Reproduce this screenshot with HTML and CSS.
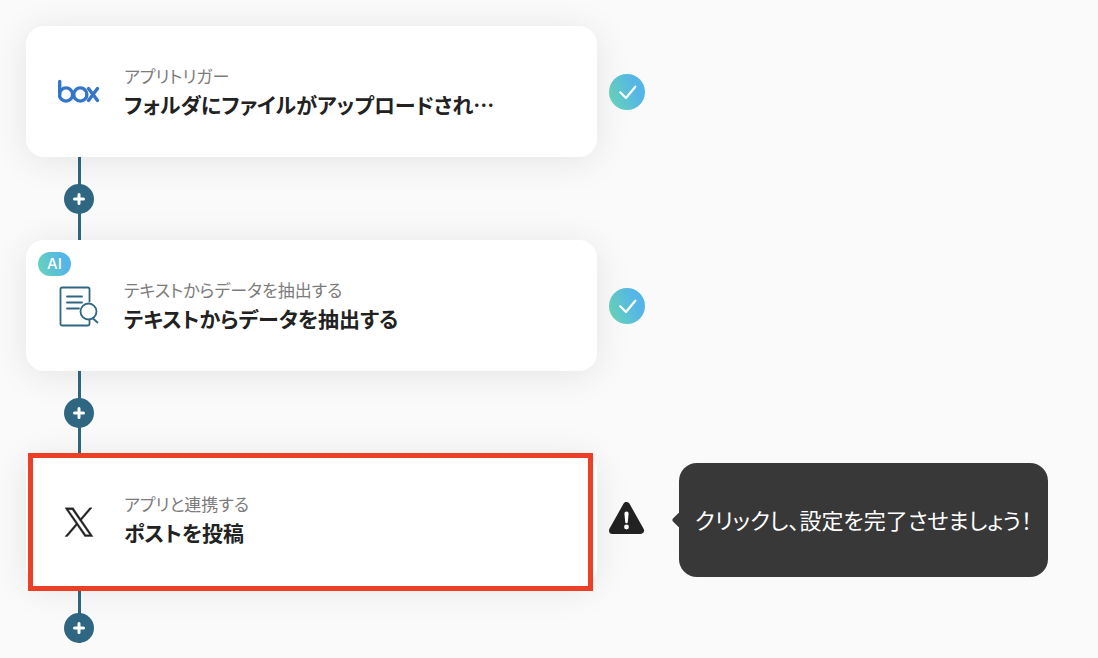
FILE: index.html
```html
<!DOCTYPE html>
<html lang="ja">
<head>
    <meta charset="UTF-8">
    <meta name="viewport" content="width=device-width, initial-scale=1.0">
    <title>フロー</title>
    <link rel="stylesheet" href="styles.css">
</head>
<body>
    <main class="flow">
        <section class="step">
            <div class="card">
                <svg class="icon" viewBox="0 0 42 42" fill="none" stroke="#3375c9" stroke-width="3.400" stroke-linecap="round">
                    <path d="M1.700 10.500v13"/>
                    <circle cx="8" cy="23.500" r="6.600"/>
                    <circle cx="22.300" cy="23.500" r="6.600"/>
                    <path d="M30.500 17.500l9 12M39.500 17.500l-9 12"/>
                </svg>
                <div class="text">
                    <p class="label">アプリトリガー</p>
                    <h2 class="title">フォルダにファイルがアップロードされ…</h2>
                </div>
            </div>
            <svg class="status" viewBox="0 0 36 36" role="img" aria-label="完了">
                <defs>
                    <linearGradient id="done" x1="0" y1="0.7" x2="1" y2="0.3">
                        <stop offset="0.05" stop-color="#68d3bd"/>
                        <stop offset="0.75" stop-color="#55b5e6"/>
                    </linearGradient>
                </defs>
                <circle cx="18" cy="18" r="18" fill="url(#done)"/>
                <path d="M11.200 18.300l5.800 5.700 9.300-11.300" fill="none" stroke="#fff" stroke-width="2.200" stroke-linecap="round" stroke-linejoin="round"/>
            </svg>
        </section>

        <div class="connector">
            <button type="button" class="add" aria-label="追加">
                <svg viewBox="0 0 12 12" stroke="#fff" stroke-width="3" stroke-linecap="round"><path d="M6 1.500v9M1.500 6h9"/></svg>
            </button>
        </div>

        <section class="step">
            <div class="card">
                <span class="badge">AI</span>
                <svg class="icon" viewBox="0 0 42 42" fill="none" stroke="#2f6782" stroke-width="1.800" stroke-linecap="round" stroke-linejoin="round">
                    <path d="M31.500 16.500V4A1.500 1.500 0 0 0 30 2.500H4A1.500 1.500 0 0 0 2.500 4v35A1.500 1.500 0 0 0 4 40.500h26a1.500 1.500 0 0 0 1.500-1.500v-5"/>
                    <path d="M9 11.500h15M9 17.500h15M9 23.500h12"/>
                    <circle cx="30.500" cy="26.500" r="8" fill="#fff"/>
                    <path d="M35 33.500l4.500 4"/>
                </svg>
                <div class="text">
                    <p class="label">テキストからデータを抽出する</p>
                    <h2 class="title">テキストからデータを抽出する</h2>
                </div>
            </div>
            <svg class="status" viewBox="0 0 36 36" role="img" aria-label="完了">
                <circle cx="18" cy="18" r="18" fill="url(#done)"/>
                <path d="M11.200 18.300l5.800 5.700 9.300-11.300" fill="none" stroke="#fff" stroke-width="2.200" stroke-linecap="round" stroke-linejoin="round"/>
            </svg>
        </section>

        <div class="connector">
            <button type="button" class="add" aria-label="追加">
                <svg viewBox="0 0 12 12" stroke="#fff" stroke-width="3" stroke-linecap="round"><path d="M6 1.500v9M1.500 6h9"/></svg>
            </button>
        </div>

        <section class="step">
            <div class="card selected">
                <svg class="icon" viewBox="-300 -380 1800 1800" fill="#222" stroke="#222" stroke-width="16">
                    <path d="M714.163 519.284L1160.890 0H1055.030L667.137 450.887L357.328 0H0L468.492 681.821L0 1226.370H105.866L515.491 750.218L842.672 1226.370H1200L714.137 519.284H714.163ZM569.165 687.828L521.697 619.934L144.011 79.694H306.615L611.412 515.685L658.880 583.579L1055.080 1150.300H892.476L569.165 687.854V687.828Z"/>
                </svg>
                <div class="text">
                    <p class="label">アプリと連携する</p>
                    <h2 class="title">ポストを投稿</h2>
                </div>
            </div>
            <svg class="status" viewBox="0 0 36 36" role="img" aria-label="未設定">
                <path d="M17.500 3.500L31.500 28.500H3.500z" fill="#222" stroke="#222" stroke-width="7" stroke-linejoin="round"/>
                <path d="M15.400 11.500a2.100 2.100 0 0 1 4.200 0l-.8 8.500a1.300 1.300 0 0 1-2.600 0z" fill="#fff"/>
                <circle cx="17.500" cy="25" r="2.400" fill="#fff"/>
            </svg>
            <div class="tooltip">クリックし、設定を完了させましょう！</div>
        </section>

        <div class="connector last">
            <button type="button" class="add" aria-label="追加">
                <svg viewBox="0 0 12 12" stroke="#fff" stroke-width="3" stroke-linecap="round"><path d="M6 1.500v9M1.500 6h9"/></svg>
            </button>
        </div>
    </main>
</body>
</html>
```
FILE: styles.css
```css
* {
    box-sizing: border-box;
}

body {
    margin: 0;
    background-color: #fafafa;
    color: #222;
    font-family: "Noto Sans CJK JP", sans-serif;
    font-feature-settings: "palt";
}

.flow {
    padding: 26px 0 0 26px;
}

.step {
    display: flex;
    align-items: center;
    gap: 12px;
}

.card {
    position: relative;
    display: flex;
    align-items: center;
    gap: 24px;
    width: 52vw;
    height: 131px;
    padding: 0 32px;
    background-color: #fff;
    border-radius: 18px;
    box-shadow: 0 4px 36px rgba(0, 0, 0, 0.09);
}

.selected {
    isolation: isolate;
}

/* red frame over the step that still needs settings */
.selected::after {
    content: "";
    position: absolute;
    z-index: -1;
    inset: -1px 4px -6px 2px;
    border: 5px solid #ec4026;
    background-color: #fff;
}

.icon {
    flex: none;
    width: 42px;
    height: 42px;
}

.text {
    min-width: 0;
    padding-bottom: 2px;
}

.label {
    margin: 0;
    color: #7c7c7c;
    font-size: 17px;
    line-height: 26px;
}

.title {
    margin: 0;
    font-size: 21px;
    font-weight: 700;
    line-height: 30px;
    white-space: nowrap;
    overflow: hidden;
    text-overflow: ellipsis;
}

.badge {
    position: absolute;
    top: 12px;
    left: 12px;
    padding: 0 9px;
    border-radius: 12px;
    background: linear-gradient(70deg, #68d3bd 5%, #55b5e6 75%);
    color: #fff;
    font-family: Inter, sans-serif;
    font-size: 15px;
    font-weight: 500;
    line-height: 24px;
}

.status {
    flex: none;
    width: 36px;
    height: 36px;
}

.connector {
    display: flex;
    align-items: center;
    height: 83px;
    padding-left: 38px;
    background: linear-gradient(#2f6782, #2f6782) 52px 0 / 3px 100% no-repeat;
}

.last {
    height: 58px;
    align-items: flex-end;
}

.add {
    display: flex;
    align-items: center;
    justify-content: center;
    width: 30px;
    height: 30px;
    padding: 0;
    border: none;
    border-radius: 50%;
    background-color: #2f6782;
    cursor: pointer;
}

.add svg {
    width: 12px;
    height: 12px;
}

.tooltip {
    position: relative;
    margin-left: 22px;
    padding: 41px 16px 43px;
    border-radius: 18px;
    background-color: #383838;
    color: #fff;
    font-size: 22px;
    line-height: 30px;
    white-space: nowrap;
}

.tooltip::before {
    content: "";
    position: absolute;
    top: 50%;
    left: -5px;
    width: 12px;
    height: 12px;
    margin-top: -6px;
    border-radius: 2px;
    background-color: #383838;
    transform: rotate(45deg);
}
```
